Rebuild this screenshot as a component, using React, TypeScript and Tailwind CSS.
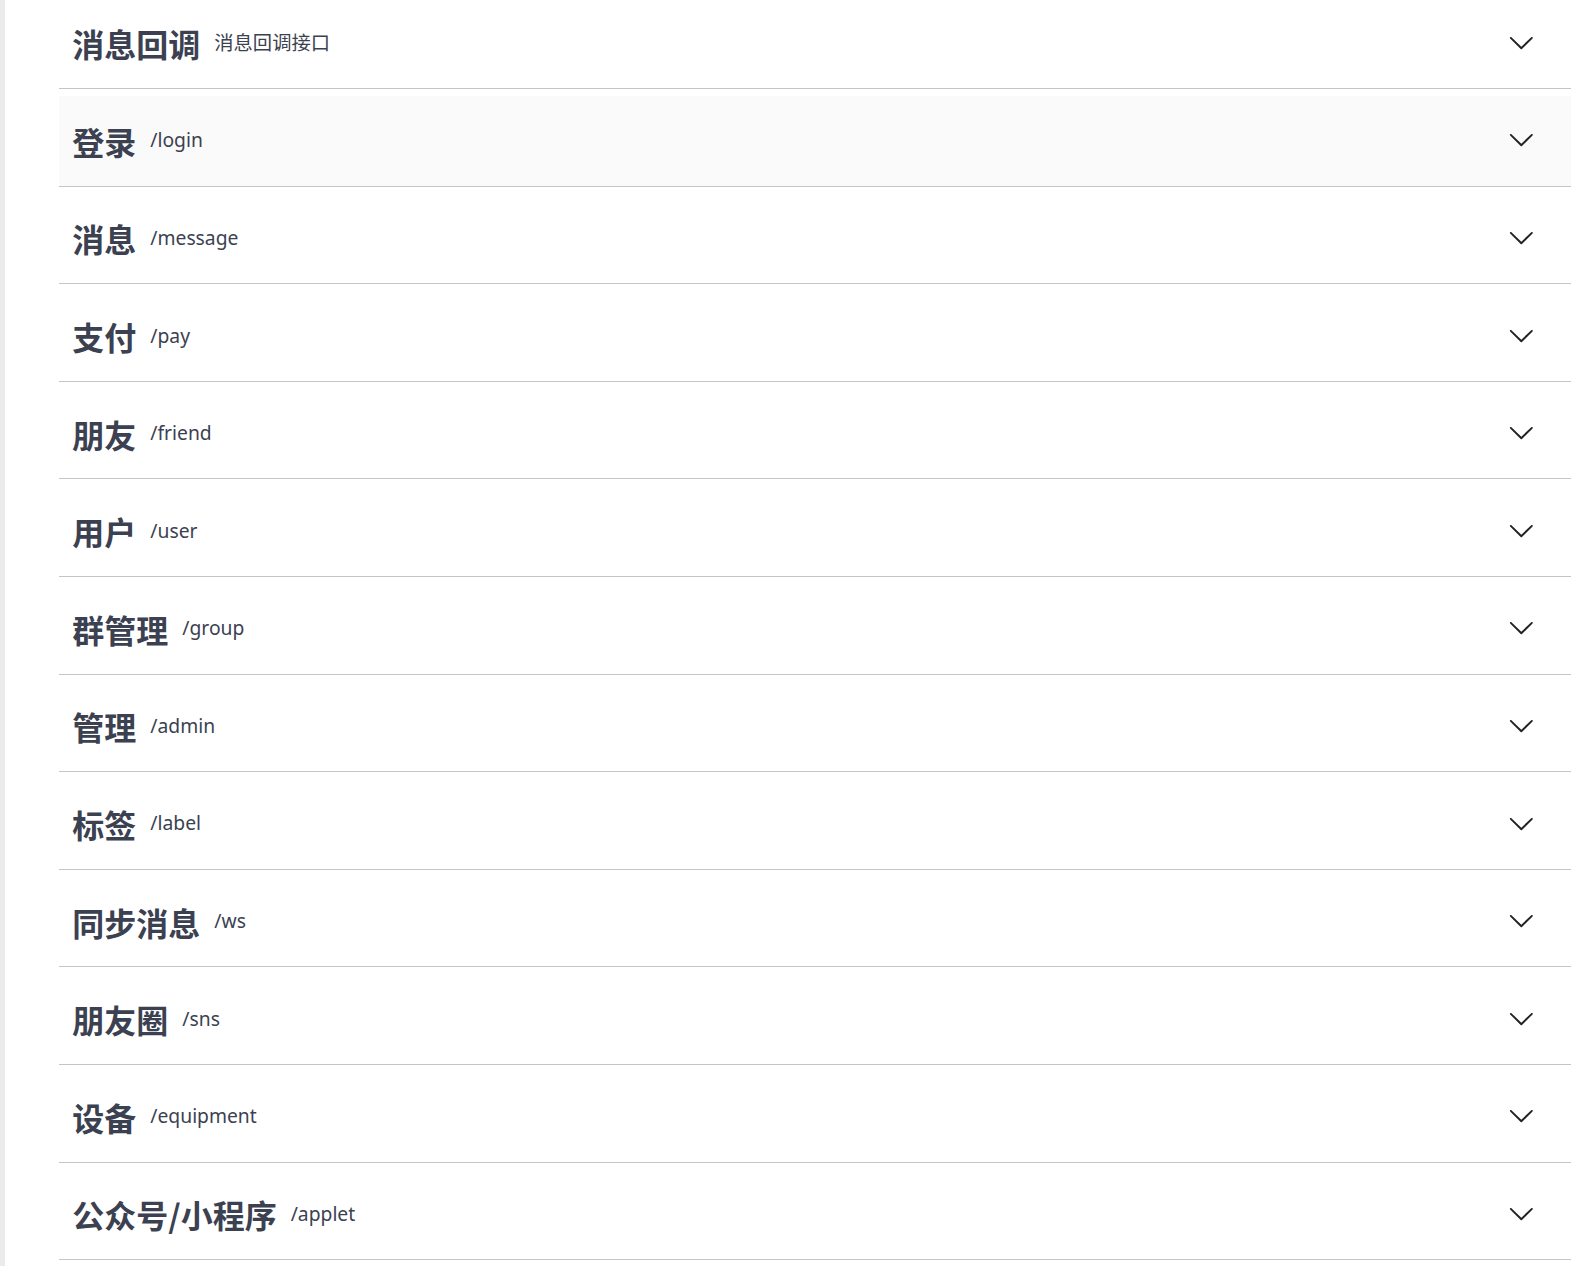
import React from "react";

const tags: { name: string; desc: string }[] = [
  { name: "消息回调", desc: "消息回调接口" },
  { name: "登录", desc: "/login" },
  { name: "消息", desc: "/message" },
  { name: "支付", desc: "/pay" },
  { name: "朋友", desc: "/friend" },
  { name: "用户", desc: "/user" },
  { name: "群管理", desc: "/group" },
  { name: "管理", desc: "/admin" },
  { name: "标签", desc: "/label" },
  { name: "同步消息", desc: "/ws" },
  { name: "朋友圈", desc: "/sns" },
  { name: "设备", desc: "/equipment" },
  { name: "公众号/小程序", desc: "/applet" },
];

function Arrow() {
  return (
    <svg className="w-[26.7px] h-[26.7px] fill-[#222] -translate-y-[1px]" viewBox="0 0 20 20" aria-hidden>
      <path d="M17.418 6.109c.272-.268.709-.268.979 0s.271.701 0 .969l-7.908 7.83c-.27.268-.707.268-.979 0l-7.908-7.83c-.27-.268-.27-.701 0-.969.271-.268.709-.268.979 0L10 13.25l7.418-7.141z" />
    </svg>
  );
}

export default function App() {
  return (
    <div className="min-h-screen bg-white flex overflow-hidden">
      {/* thin rail on the left */}
      <div className="w-[5px] shrink-0 bg-[#ebebed]" />
      <div className="flex-1 pl-[54px] pr-[17px]">
        <div className="mt-[-1.6px]">
          {tags.map((t, i) => (
            <div
              key={t.name}
              className={`h-[90.6px] mb-[7px] flex items-center pl-[13.3px] pr-[36.5px] border-b border-[#c4c5c9] ${
                i === 1 ? "bg-[#fafafa]" : ""
              }`}
            >
              <h3 className="text-[32px] font-bold text-[#3b4151] leading-none font-['Noto_Sans_CJK_SC','Noto_Sans',sans-serif]">
                {t.name}
              </h3>
              <small className="flex-1 pl-[14px] pr-[13.3px] text-[19.3px] font-normal text-[#3b4151] font-['Noto_Sans','Noto_Sans_CJK_SC',sans-serif]">
                {t.desc}
              </small>
              <Arrow />
            </div>
          ))}
        </div>
      </div>
    </div>
  );
}
